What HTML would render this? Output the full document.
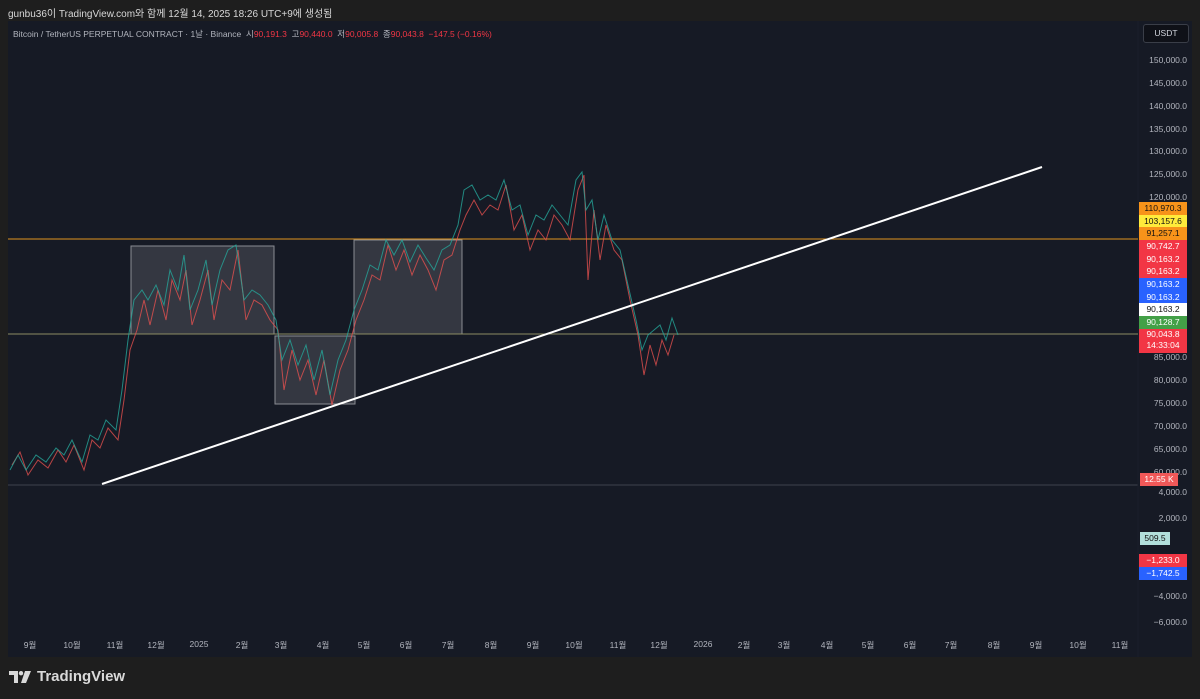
<!DOCTYPE html>
<html><head><meta charset="utf-8"><style>
body{margin:0;width:1200px;height:699px;background:#1e1e1e;overflow:hidden;font-family:"Liberation Sans","Noto Sans CJK KR",sans-serif;position:relative}
.hdr{position:absolute;left:8px;top:5px;font-size:10px;color:#d8d8d8}
.chart{position:absolute;left:8px;top:21px;width:1184px;height:636px;background:#161a25}
.leg{position:absolute;left:13px;top:28px;font-size:8.5px;color:#b2b5be}
.leg span{color:#f23645}
.ax{position:absolute;right:13px;font-size:8.5px;color:#b2b5be;text-align:right}
.tag{position:absolute;left:1139px;width:48px;height:12.5px;font-size:8.5px;line-height:12.5px;text-align:center;color:#fff}
.tl{position:absolute;top:639px;font-size:8.5px;color:#b2b5be;transform:translateX(-50%)}
.usdt{position:absolute;left:1143px;top:24px;width:44px;height:17px;border:1px solid #3a3e48;background:#0f1118;border-radius:3px;color:#d1d4dc;font-size:8.5px;line-height:17px;text-align:center}
.logo{position:absolute;left:9px;top:668px;font-size:15px;font-weight:bold;color:#d9d9d9;display:flex;align-items:center;gap:6px}
</style></head><body>
<div class="hdr">gunbu36이 TradingView.com와 함께 12월 14, 2025 18:26 UTC+9에 생성됨</div>
<div class="chart"></div>
<div class="leg">Bitcoin / TetherUS PERPETUAL CONTRACT · 1날 · Binance &nbsp;시<span>90,191.3</span> &nbsp;고<span>90,440.0</span> &nbsp;저<span>90,005.8</span> &nbsp;종<span>90,043.8 &nbsp;−147.5 (−0.16%)</span></div>
<div class="usdt">USDT</div>
<svg style="position:absolute;left:0;top:0" width="1200" height="699">
<line x1="8" y1="485" x2="1138" y2="485" stroke="#2a2e39" stroke-width="2"/>
<line x1="1138" y1="21" x2="1138" y2="657" stroke="#1b1f2a"/>
<rect x="131" y="246" width="143" height="88" fill="rgba(255,255,255,0.13)" stroke="#8a8c92"/>
<rect x="275" y="336" width="80" height="68" fill="rgba(255,255,255,0.13)" stroke="#8a8c92"/>
<rect x="354" y="240" width="108" height="94" fill="rgba(255,255,255,0.13)" stroke="#8a8c92"/>
<line x1="8" y1="239" x2="1138" y2="239" stroke="#e0941e"/>
<line x1="8" y1="334" x2="1138" y2="334" stroke="#8c8c64"/>
<polyline fill="none" stroke="#ef5350" stroke-width="1" opacity=".75" points="12,465 20,452 28,475 38,460 48,468 58,450 66,462 74,445 84,470 92,440 100,448 108,428 118,440 124,400 130,350 137,330 144,300 150,325 158,290 166,320 172,280 180,300 186,270 192,325 200,300 208,270 214,320 222,280 230,290 238,250 246,320 254,300 262,305 270,320 278,330 284,390 292,350 300,380 308,360 316,395 324,360 332,405 340,370 348,350 356,320 364,300 372,275 380,280 388,245 396,270 404,250 412,275 420,255 428,270 436,290 444,260 452,255 460,230 466,215 474,200 482,215 490,205 498,210 506,185 514,230 522,215 530,250 538,230 546,240 554,215 562,225 570,240 578,190 584,175 588,280 594,210 600,260 606,225 614,250 622,260 630,300 638,335 644,375 650,345 656,365 662,340 668,355 674,335"/>
<polyline fill="none" stroke="#26a69a" stroke-width="1" opacity=".8" points="10,470 18,455 26,470 36,455 46,462 56,448 64,455 72,440 82,462 90,435 98,440 106,420 116,430 122,390 128,340 134,300 142,290 148,300 156,285 164,305 170,270 178,290 184,255 190,310 198,290 206,260 212,305 220,270 228,250 236,245 244,300 252,290 260,295 268,305 276,320 282,360 290,340 298,365 306,345 314,380 322,350 330,395 338,360 346,340 354,310 362,290 370,265 378,270 386,240 394,255 402,240 410,262 418,245 426,258 434,270 442,250 450,245 458,225 464,190 472,185 480,200 488,195 496,200 504,180 512,210 520,205 528,235 536,215 544,220 552,205 560,215 568,225 576,180 582,172 586,210 592,200 598,240 604,215 612,240 620,250 628,285 636,320 642,350 648,335 654,330 660,325 666,340 672,318 678,335"/>
<line x1="102" y1="484" x2="1042" y2="167" stroke="#fff" stroke-width="2"/>
</svg>
<div class="ax" style="top:55px">150,000.0</div>
<div class="ax" style="top:78px">145,000.0</div>
<div class="ax" style="top:101px">140,000.0</div>
<div class="ax" style="top:124px">135,000.0</div>
<div class="ax" style="top:146px">130,000.0</div>
<div class="ax" style="top:169px">125,000.0</div>
<div class="ax" style="top:192px">120,000.0</div>
<div class="ax" style="top:352px">85,000.0</div>
<div class="ax" style="top:375px">80,000.0</div>
<div class="ax" style="top:398px">75,000.0</div>
<div class="ax" style="top:421px">70,000.0</div>
<div class="ax" style="top:444px">65,000.0</div>
<div class="ax" style="top:467px">60,000.0</div>
<div class="ax" style="top:487px">4,000.0</div>
<div class="ax" style="top:513px">2,000.0</div>
<div class="ax" style="top:591px">−4,000.0</div>
<div class="ax" style="top:617px">−6,000.0</div>
<div class="tag" style="top:202px;background:#f7931a;color:#111">110,970.3</div>
<div class="tag" style="top:214.5px;background:#ffeb3b;color:#111">103,157.6</div>
<div class="tag" style="top:227px;background:#f7931a;color:#111">91,257.1</div>
<div class="tag" style="top:240px;background:#f23645">90,742.7</div>
<div class="tag" style="top:252.5px;background:#f23645">90,163.2</div>
<div class="tag" style="top:265px;background:#f23645">90,163.2</div>
<div class="tag" style="top:278px;background:#2962ff">90,163.2</div>
<div class="tag" style="top:290.5px;background:#2962ff">90,163.2</div>
<div class="tag" style="top:303px;background:#fff;color:#111">90,163.2</div>
<div class="tag" style="top:316px;background:#43a047">90,128.7</div>
<div class="tag" style="top:328.5px;height:24px;background:#f23645;line-height:11.5px">90,043.8<br>14:33:04</div>
<div class="tag" style="top:473px;left:1140px;width:38px;background:#f05858">12.55 K</div>
<div class="tag" style="top:532px;left:1140px;width:30px;background:#b2dfdb;color:#111">509.5</div>
<div class="tag" style="top:554px;background:#f23645">−1,233.0</div>
<div class="tag" style="top:567px;background:#2962ff">−1,742.5</div>
<div class="tl" style="left:30px">9월</div><div class="tl" style="left:72px">10월</div><div class="tl" style="left:115px">11월</div><div class="tl" style="left:156px">12월</div><div class="tl" style="left:199px">2025</div><div class="tl" style="left:242px">2월</div><div class="tl" style="left:281px">3월</div><div class="tl" style="left:323px">4월</div><div class="tl" style="left:364px">5월</div><div class="tl" style="left:406px">6월</div><div class="tl" style="left:448px">7월</div><div class="tl" style="left:491px">8월</div><div class="tl" style="left:533px">9월</div><div class="tl" style="left:574px">10월</div><div class="tl" style="left:618px">11월</div><div class="tl" style="left:659px">12월</div><div class="tl" style="left:703px">2026</div><div class="tl" style="left:744px">2월</div><div class="tl" style="left:784px">3월</div><div class="tl" style="left:827px">4월</div><div class="tl" style="left:868px">5월</div><div class="tl" style="left:910px">6월</div><div class="tl" style="left:951px">7월</div><div class="tl" style="left:994px">8월</div><div class="tl" style="left:1036px">9월</div><div class="tl" style="left:1078px">10월</div><div class="tl" style="left:1120px">11월</div>
<div class="logo"><svg width="22" height="12" viewBox="0 0 22 12"><path d="M0 0h9v12h-4v-8h-5z" fill="#d9d9d9"/><circle cx="12" cy="2.2" r="2.2" fill="#d9d9d9"/><path d="M16 0h6l-5 12h-5z" fill="#d9d9d9"/></svg>TradingView</div>
</body></html>
